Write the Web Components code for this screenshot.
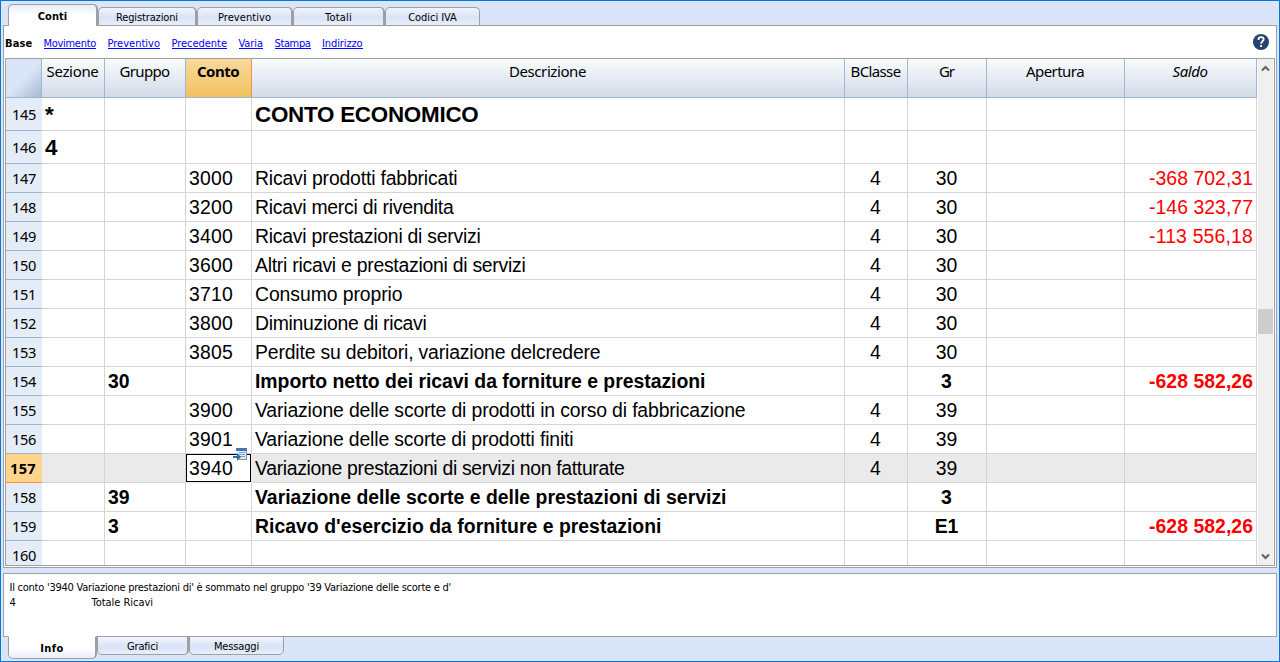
<!DOCTYPE html>
<html lang="it">
<head>
<meta charset="utf-8">
<title>Piano dei conti</title>
<style>
html,body{margin:0;height:100%;overflow:hidden}
body{font:11px "DejaVu Sans Condensed","DejaVu Sans",sans-serif;font-stretch:condensed;color:#000}
</style>
</head>
<body>
<account-app></account-app>
<script>
class FitText extends HTMLElement{
  connectedCallback(){
    if(!this.shadowRoot)this.attachShadow({mode:'open'}).innerHTML='<style>:host{display:inline-block;white-space:pre}</style><slot></slot>';
    const w=+this.getAttribute('w');
    if(w){const n=this.textContent.length,d=(w-this.getBoundingClientRect().width)/n;
      this.style.letterSpacing=d+'px';}
  }
}
const fit=(t,w)=>`<fit-text w="${w||''}">${t}</fit-text>`;

class TabItem extends HTMLElement{
  connectedCallback(){
    this.attachShadow({mode:'open'}).innerHTML=`<style>
    :host{box-sizing:border-box;display:flex;justify-content:center;height:18px;line-height:19px;margin-top:3px;
      border:1px solid #9f9f9f;border-right-width:2px;border-bottom:0;border-radius:5px 5px 0 0;
      background:linear-gradient(#f0f5fd,#dbe5f8 50%,#dbe5f8 65%,#e8effb)}
    :host([active]){height:22px;margin-top:0;line-height:24px;font-weight:bold;background:linear-gradient(#e6edfb,#fff 50%);position:relative;z-index:1}
    :host([bottom]){margin-top:0;height:19px;line-height:20px;border-top:1px solid #9f9f9f;border-bottom:1px solid #9f9f9f;border-radius:0 0 5px 5px;
      background:linear-gradient(#f0f5fd,#dbe5f8 50%,#dbe5f8 65%,#e8effb)}
    :host([bottom][active]){height:23px;line-height:23px;border-top-color:#fff;background:linear-gradient(#fff 50%,#e6edfb)}
    :host(:last-child){border-right-width:1px}
    </style><slot></slot>`;
  }
}
class ViewLinks extends HTMLElement{
  connectedCallback(){
    const links=[['Movimento',52.5],['Preventivo',52.5],['Precedente',55.5],['Varia',24.5],['Stampa',36],['Indirizzo',40.5]];
    this.attachShadow({mode:'open'}).innerHTML=`<style>
    :host{display:flex;height:32px;align-items:center;padding:0 7px 0 1px}
    b{margin:2px 11px 0 0} a{color:#00f;text-decoration:none;margin:2px 11.5px 0 0;height:11px;line-height:13px;border-bottom:1px solid #00f}
    svg{margin-left:auto;margin-top:-1px}</style><b>${fit('Base',27.5)}</b>${links.map(l=>`<a>${fit(...l)}</a>`).join('')}
    <svg width="16" height="16" viewBox="0 0 16 16"><circle cx="8" cy="8" r="8" fill="#24446f"/><path d="M5.5 6V5.5C5.5 4 6.5 3.2 8 3.2S10.6 4 10.6 5.4C10.6 7.2 8.1 7.3 8.1 9.7M8.1 11v2" fill="none" stroke="#fff" stroke-width="1.8"/></svg>`;
  }
}
const COLS='36px 63px 81px 66px 593px 63px 79px 138px 132px';
class GridHeader extends HTMLElement{
  connectedCallback(){
    const h=[['Sezione',52],['Gruppo',50],['Conto',42],['Descrizione',77],['BClasse',50],['Gr',15],['Apertura',58],['Saldo',35]];
    this.attachShadow({mode:'open'}).innerHTML=`<style>
    :host{display:grid;flex:none;grid-template-columns:${COLS};height:39px;font:15px/25px "Noto Sans",sans-serif}
    div{box-sizing:border-box;border-right:1px solid #9eb6ce;border-bottom:1px solid #9eb6ce;text-align:center;background:linear-gradient(#f9fcfd,#d3dbe9);padding-right:1px}
    .corner{background:linear-gradient(135deg,#dbe5f8 50%,#a5bbd3)}
    .sel{background:linear-gradient(#f8d99d,#f1c15f);border-color:#f29436;border-bottom-color:#9eb6ce;font-weight:bold}
    .it{font-style:italic}</style><div class="corner"></div>${h.map((x,i)=>`<div class="${i==2?'sel':i==7?'it':''}">${fit(...x)}</div>`).join('')}`;
  }
}
class AccountRow extends HTMLElement{
  set data(r){
    const [n,sez,gru,con,des,w,bc,gr,sal,kind]=r;
    this.className=kind||'';
    this.attachShadow({mode:'open'}).innerHTML=`<style>
    :host{display:grid;grid-template-columns:${COLS};grid-template-rows:100%;height:29px;flex:none;line-height:28px;font-family:"Liberation Sans",sans-serif;font-size:19.4px}
    :host(.title){height:33px;line-height:34px;font-size:22.4px;font-weight:bold}
    :host(.bold){font-weight:bold}
    :host(.cur){background:#eaeaea}
    div{box-sizing:border-box;border-right:1px solid #d4d4d4;border-bottom:1px solid #d4d4d4;padding:0 3px;white-space:pre;position:relative}
    .n{font:14.6px/29px "Noto Sans",sans-serif;background:#e4ecf7;border-right:0;border-bottom-color:#9eb6ce;text-align:right;padding-right:6px}
    :host(.title) .n{line-height:32px}
    :host(.cur) .n{background:#ffd58d;border-bottom-color:#f29436;font-weight:bold}
    .c{text-align:center;padding-right:4px}.r{text-align:right;color:#f00;padding-right:3px}
    .focus{background:#fff;outline:1px solid #000;outline-offset:-1px;border:0;margin:0 1px 1px 0;padding:0 3px}
    svg{position:absolute;left:47px;top:-7px}
    </style><div class="n">${fit(n,n=='157'?26:24)}</div><div>${sez}</div><div>${gru}</div><div class="${kind=='cur'?'focus':''}">${con?fit(con,44):''}${kind=='cur'?`<svg width="15" height="14" viewBox="0 0 15 14"><path d="M3 1h11v12H6v-2h7V3H3z" fill="#8b9096"/><path d="M4 3h9v9H4z" fill="#e4eaf2"/><path d="M3 1h11v3H3z" fill="#3d77b5"/><path d="M6 5.5h6M6 7.5h6M7 9.5h5" stroke="#7da3cc"/><path d="M0 9h4V6l4 4-4 4v-3H0z" fill="#2f6dae"/></svg>`:''}</div>
    <div>${des?fit(des,w-.5):''}</div><div class="c">${bc}</div><div class="c">${gr}</div><div></div><div class="r">${sal?fit(sal,104):''}</div>`;
  }
}
class ScrollBar extends HTMLElement{
  connectedCallback(){
    this.attachShadow({mode:'open'}).innerHTML=`<style>
    :host{display:flex;flex-direction:column;align-items:center;width:15px;margin-left:1px;background:#f0f0f0}
    i{flex:none;width:15px;height:25px;background:#cdcdcd;margin-top:237px}
    svg{flex:none;margin-top:6px}.d{margin:auto 0 5px}</style>
    <svg width="9" height="7" viewBox="0 0 9 7"><path d="M1 5.5 4.5 2 8 5.5" fill="none" stroke="#606060" stroke-width="2"/></svg><i></i>
    <svg class="d" width="9" height="7" viewBox="0 0 9 7"><path d="M1 1.5 4.5 5 8 1.5" fill="none" stroke="#606060" stroke-width="2"/></svg>`;
  }
}
const ROWS=[
['145','*','','','CONTO ECONOMICO',224,'','','','title'],
['146','4','','','',0,'','','','title'],
['147','','','3000','Ricavi prodotti fabbricati',203,4,30,'-368 702,31'],
['148','','','3200','Ricavi merci di rivendita',199,4,30,'-146 323,77'],
['149','','','3400','Ricavi prestazioni di servizi',226,4,30,'-113 556,18'],
['150','','','3600','Altri ricavi e prestazioni di servizi',271,4,30,''],
['151','','','3710','Consumo proprio',148,4,30,''],
['152','','','3800','Diminuzione di ricavi',172,4,30,''],
['153','','','3805','Perdite su debitori, variazione delcredere',346,4,30,''],
['154','','30','','Importo netto dei ricavi da forniture e prestazioni',451,'',3,'-628 582,26','bold'],
['155','','','3900','Variazione delle scorte di prodotti in corso di fabbricazione',491,4,39,''],
['156','','','3901','Variazione delle scorte di prodotti finiti',319,4,39,''],
['157','','','3940','Variazione prestazioni di servizi non fatturate',370,4,39,'','cur'],
['158','','39','','Variazione delle scorte e delle prestazioni di servizi',472,'',3,'','bold'],
['159','','3','',"Ricavo d'esercizio da forniture e prestazioni",407,'','E1','-628 582,26','bold'],
['160','','','','',0,'','','']];
class AccountGrid extends HTMLElement{
  connectedCallback(){
    const s=this.attachShadow({mode:'open'});
    s.innerHTML=`<style>:host{display:flex;box-sizing:border-box;height:508px;width:1270px;margin-left:1px;border:1px solid #9f9f9f;overflow:hidden}
    main{width:1251px;display:flex;flex-direction:column;overflow:hidden}</style><main><grid-header></grid-header></main><scroll-bar></scroll-bar>`;
    const m=s.querySelector('main');
    for(const r of ROWS){const e=document.createElement('account-row');m.append(e);e.data=r;}
  }
}
class AccountApp extends HTMLElement{
  connectedCallback(){
    this.attachShadow({mode:'open'}).innerHTML=`<style>
    :host{display:flex;flex-direction:column;box-sizing:border-box;width:1280px;height:662px;border:1px solid #0078d7;background:#dae5f9;padding:3px 2px 0}
    nav{display:flex;padding-left:5px;height:21px;flex:none}
    .panel{box-sizing:border-box;width:1274px;border:1px solid #9f9f9f;background:#fff;flex:none}
    .top{height:543px}
    .info{height:64px;margin-top:5px;padding:6px 5.5px;line-height:15px}
    .info p{margin:0;display:flex}.k{width:82px}
    .low{margin-top:-1px}
    </style>
    <nav><tab-item active style="width:90px">${fit('Conti',29.5)}</tab-item><tab-item style="width:99px">${fit('Registrazioni',62)}</tab-item><tab-item style="width:96px">${fit('Preventivo',53)}</tab-item><tab-item style="width:92px">${fit('Totali',27)}</tab-item><tab-item style="width:95px">${fit('Codici IVA',48.5)}</tab-item></nav>
    <section class="panel top"><view-links></view-links><account-grid></account-grid></section>
    <section class="panel info"><p>${fit("Il conto '3940 Variazione prestazioni di' è sommato nel gruppo '39 Variazione delle scorte e d'",441.5)}</p><p><span class="k">4</span>${fit('Totale Ricavi',61.5)}</p></section>
    <nav class="low"><tab-item bottom active style="width:89px">${fit('Info',23.5)}</tab-item><tab-item bottom style="width:92px">${fit('Grafici',31)}</tab-item><tab-item bottom style="width:95px">${fit('Messaggi',45)}</tab-item></nav>`;
  }
}
customElements.define('fit-text',FitText);
customElements.define('tab-item',TabItem);
customElements.define('view-links',ViewLinks);
customElements.define('grid-header',GridHeader);
customElements.define('account-row',AccountRow);
customElements.define('scroll-bar',ScrollBar);
customElements.define('account-grid',AccountGrid);
customElements.define('account-app',AccountApp);
</script>
</body>
</html>
